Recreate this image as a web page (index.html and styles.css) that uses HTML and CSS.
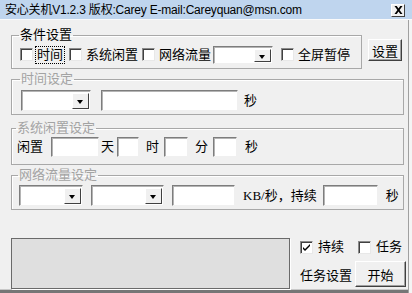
FILE: index.html
```html
<!DOCTYPE html>
<html lang="zh">
<head>
    <meta charset="utf-8">
    <title>安心关机</title>
    <link rel="stylesheet" href="styles.css">
</head>
<body>
    <div class="window">
        <div class="titlebar">
            <span class="title">安心关机V1.2.3 版权:Carey E-mail:Careyquan@msn.com</span>
            <span class="close">
                <svg width="9" height="8" viewBox="0 0 9 8"><path d="M0.5 0h2.2l1.8 2.4L6.3 0h2.2L5.6 4 8.5 8H6.3L4.5 5.6 2.7 8H0.5l2.9-4z" fill="#000"/></svg>
            </span>
        </div>
        <div class="client">
            <div class="row-top">
                <fieldset class="group g-cond">
                    <legend>条件设置</legend>
                    <div class="line">
                        <span class="chk"></span><span class="lbl focus">时间</span>
                        <span class="chk"></span><span class="lbl">系统闲置</span>
                        <span class="chk"></span><span class="lbl">网络流量</span>
                        <span class="combo w60"><span class="arrow"></span></span>
                        <span class="chk gap12"></span><span class="lbl">全屏暂停</span>
                    </div>
                </fieldset>
                <button class="btn btn-set">设置</button>
            </div>

            <fieldset class="group off g-time">
                <legend>时间设定</legend>
                <div class="line">
                    <span class="combo w70"><span class="arrow"></span></span>
                    <span class="edit w137 ml10"></span>
                    <span class="txt ml6">秒</span>
                </div>
            </fieldset>

            <fieldset class="group off g-idle">
                <legend>系统闲置设定</legend>
                <div class="line">
                    <span class="txt">闲置</span>
                    <span class="edit w48 ml8"></span>
                    <span class="txt ml2">天</span>
                    <span class="edit w22 ml3"></span>
                    <span class="txt ml7">时</span>
                    <span class="edit w24 ml5"></span>
                    <span class="txt ml7">分</span>
                    <span class="edit w24 ml5"></span>
                    <span class="txt ml8">秒</span>
                </div>
            </fieldset>

            <fieldset class="group off g-net">
                <legend>网络流量设定</legend>
                <div class="line">
                    <span class="combo w64"><span class="arrow"></span></span>
                    <span class="combo w73 ml8"><span class="arrow"></span></span>
                    <span class="edit w63 ml8"></span>
                    <span class="txt ml8"><span class="kb">KB/</span>秒，持续</span>
                    <span class="edit w55 ml6"></span>
                    <span class="txt ml8">秒</span>
                </div>
            </fieldset>

            <div class="row-bottom">
                <div class="status"></div>
                <div class="side">
                    <div class="side-line">
                        <span class="chk on">
                            <svg width="9" height="9" viewBox="0 0 9 9"><path d="M1 4l2 2 5-5v2L3 8 1 6z" fill="#000"/></svg>
                        </span><span class="lbl">持续</span>
                        <span class="chk ml12"></span><span class="lbl">任务</span>
                    </div>
                    <div class="side-line2">
                        <span class="txt">任务设置</span>
                        <button class="btn btn-start">开始</button>
                    </div>
                </div>
            </div>
        </div>
    </div>
</body>
</html>
```

FILE: styles.css
```css
* {
    box-sizing: border-box;
    margin: 0;
    padding: 0;
}

body {
    font-family: "Liberation Sans", "Noto Sans CJK SC", sans-serif;
    font-size: 13px;
    line-height: 16px;
    color: #000;
    background: #f0f0f0;
}

.window {
    width: 412px;
    height: 293px;
    background: #f0f0f0;
    box-shadow: inset -3px 0 0 #f4f4f4, inset -4px 0 0 #a0a0a0, inset 0 -3px 0 #767676, inset 0 -4px 0 #c8c8c8;
    overflow: hidden;
}

.titlebar {
    height: 20px;
    background: #bfd5ee;
    display: flex;
    align-items: center;
    padding-left: 5px;
    border-bottom: 1px solid #fafafa;
}

.title {
    flex: 1;
    white-space: nowrap;
    font-size: 12px;
    letter-spacing: -0.2px;
}

.close {
    width: 14px;
    height: 13px;
    margin-right: 7px;
    margin-top: 1px;
    background: #f0f0f0;
    border: 1px solid;
    border-color: #fff #404040 #404040 #fff;
    display: flex;
    align-items: center;
    justify-content: center;
}

.client {
    padding: 7px 0 0 11px;
}

.row-top {
    display: flex;
    align-items: flex-start;
}

.group {
    border: 1px solid #a8a8a8;
    box-shadow: 1px 1px 0 #fff inset;
    padding: 0 8px;
    min-width: 0;
}

.group legend {
    padding: 0 1px;
    margin-left: -1px;
    line-height: 16px;
}

.group.off legend {
    color: #a3a3a3;
}

.line {
    display: flex;
    align-items: center;
}

.g-cond {
    width: 351px;
}

.g-cond .line {
    height: 19px;
    margin-top: 2px;
    margin-bottom: 4px;
}

.btn {
    font-family: inherit;
    font-size: 13px;
    background: #f0f0f0;
    border: 1px solid;
    border-color: #fff #404040 #404040 #fff;
    box-shadow: inset -1px -1px 0 #a0a0a0;
}

.btn-set {
    width: 34px;
    height: 22px;
    margin: 12px 0 0 6px;
}

.g-time, .g-idle, .g-net {
    width: 393px;
    padding-left: 9px;
}

.g-time {
    margin-top: 2px;
}

.g-time .line {
    height: 21px;
    margin-top: 3px;
    margin-bottom: 3px;
}

.g-idle {
    margin-top: 5px;
    padding-left: 5px;
}

.g-idle .line {
    height: 21px;
    margin-bottom: 7px;
}

.g-net {
    margin-top: 2px;
    padding-left: 7px;
}

.g-net .line {
    height: 21px;
    margin-top: 2px;
    margin-bottom: 3px;
}

.chk {
    width: 13px;
    height: 13px;
    flex: none;
    background: #fff;
    border: 1px solid;
    border-color: #8a8a8a #e8e8e8 #e8e8e8 #8a8a8a;
    box-shadow: inset 1px 1px 0 #404040;
    display: flex;
    align-items: center;
    justify-content: center;
    margin-right: 4px;
}

.lbl {
    white-space: nowrap;
    margin-right: 4px;
}

.focus {
    outline: 1px dotted #000;
    outline-offset: 0;
    padding: 0 1px;
    margin-left: -1px;
    margin-right: 5px;
}

.txt {
    white-space: nowrap;
}

.kb {
    font-family: "Liberation Serif", serif;
}

.edit, .combo {
    height: 21px;
    flex: none;
    background: #fff;
    border: 1px solid;
    border-color: #7d7d7d #f0f0f0 #f0f0f0 #7d7d7d;
    box-shadow: inset 1px 1px 0 #b4b4b4;
}

.g-idle .edit {
    height: 20px;
}

.combo {
    display: flex;
    justify-content: flex-end;
    padding: 2px 1px 1px 0;
}

.arrow {
    width: 17px;
    height: 100%;
    background: #f0f0f0;
    border: 1px solid;
    border-color: #fff #404040 #404040 #fff;
    position: relative;
}

.arrow::after {
    content: "";
    position: absolute;
    left: 4px;
    top: 6px;
    border-left: 3.5px solid transparent;
    border-right: 3.5px solid transparent;
    border-top: 4px solid #000;
}

.g-cond .combo {
    height: 18px;
    margin-left: -2px;
}

.g-cond .combo .arrow::after {
    top: 5px;
}

.gap12 { margin-left: 8px; }
.ml2 { margin-left: 2px; }
.ml3 { margin-left: 3px; }
.ml5 { margin-left: 5px; }
.ml6 { margin-left: 6px; }
.ml7 { margin-left: 7px; }
.ml8 { margin-left: 8px; }
.ml10 { margin-left: 10px; }
.ml12 { margin-left: 10px; }

.w22 { width: 22px; }
.w24 { width: 24px; }
.w48 { width: 48px; }
.w55 { width: 55px; }
.w60 { width: 60px; }
.w63 { width: 63px; }
.w64 { width: 64px; }
.w70 { width: 70px; }
.w73 { width: 73px; }
.w137 { width: 137px; }

.row-bottom {
    display: flex;
    margin-top: 28px;
}

.status {
    width: 279px;
    height: 51px;
    background: #dfdfdf;
    border: 1px solid #6a6a6a;
    box-shadow: 1px 1px 0 #fff;
}

.side {
    margin-left: 10px;
    display: flex;
    flex-direction: column;
}

.side-line {
    display: flex;
    align-items: center;
    height: 16px;
    margin-top: 1px;
}

.side-line .chk {
    margin-right: 5px;
}

.side-line2 {
    display: flex;
    align-items: center;
    margin-top: 6px;
}

.side-line2 .txt {
    margin-top: 4px;
}

.btn-start {
    width: 51px;
    height: 26px;
    margin-left: 3px;
}
```
